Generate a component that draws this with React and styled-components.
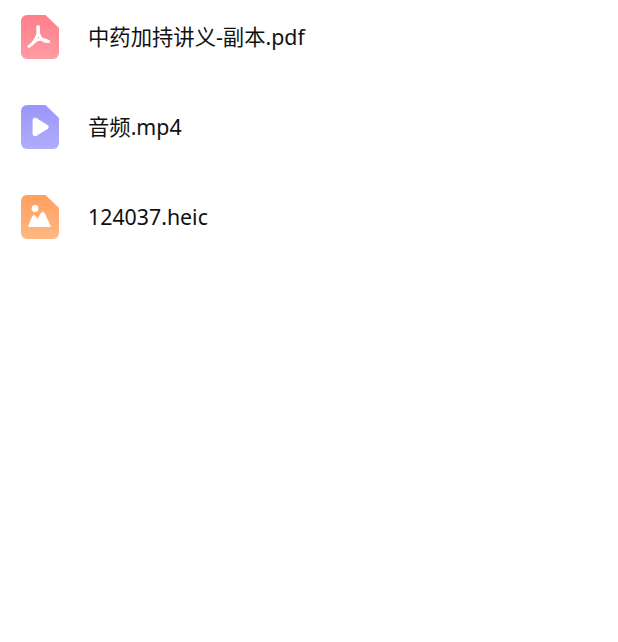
import React from "react"
import styled, { createGlobalStyle } from "styled-components"

const GlobalStyle = createGlobalStyle`
  html, body {
    margin: 0;
    background: #fff;
  }
`

const FileList = styled.ul`
  list-style: none;
  margin: 0;
  padding: 15px 0 0 21px;
  display: flex;
  flex-direction: column;
  gap: 46px;
`

const FileRow = styled.li`
  display: flex;
  align-items: center;
  gap: 29px;
  height: 44px;
`

const FileName = styled.span`
  font-family: "Noto Sans", "Noto Sans CJK SC", sans-serif;
  font-size: 21.33px;
  color: #111;
  line-height: 44px;
`

const IconSvg = styled.svg`
  display: block;
  flex: none;
  width: 38px;
  height: 44px;
`

const sheet = "M6 0H24.5L38 13V38a6 6 0 0 1-6 6H6a6 6 0 0 1-6-6V6a6 6 0 0 1 6-6Z"

const FileIcon = ({ id, from, to, children }) => (
  <IconSvg viewBox="0 0 38 44">
    <defs>
      <linearGradient id={id} x1="0" y1="0" x2="0" y2="1">
        <stop offset="0" stopColor={from} />
        <stop offset="1" stopColor={to} />
      </linearGradient>
    </defs>
    <path d={sheet} fill={`url(#${id})`} />
    {children}
  </IconSvg>
)

const PdfGlyph = () => (
  <g fill="none" stroke="#fff" strokeLinecap="round" strokeLinejoin="round">
    <path d="M16.8 11.8c-.2 3.6.8 7.8 2.8 10.8 1.9 2.8 4.6 4 8 3.9" strokeWidth="3" />
    <path d="M17.6 12c.4 4.8-1.2 9.6-3.6 13.4-1.5 2.4-3.4 4.8-6 6" strokeWidth="3" />
    <path d="M12 28c3.2-2.8 9-5.2 15.6-2" strokeWidth="2.4" />
  </g>
)

const PlayGlyph = () => (
  <path
    d="M11.6 15.2c0-1.9 2-3.1 3.6-2.1l11.4 6.9c1.5.9 1.5 3.1 0 4l-11.4 6.9c-1.6 1-3.6-.2-3.6-2.1Z"
    fill="#fff"
  />
)

const ImageGlyph = () => (
  <>
    <circle cx="14" cy="13.5" r="3.4" fill="#fff" />
    <path
      d="M7.5 31.5 11.6 21.5c.5-1.2 2-1.3 2.7-.2l2.3 3.2 3.8-6.6c.6-1 2-1 2.6 0l6.5 13.6Z"
      fill="#fff"
      stroke="#fff"
      strokeLinejoin="round"
    />
  </>
)

const files = [
  { name: "中药加持讲义-副本.pdf", id: "pdf", from: "#ff7e8b", to: "#ff9ba4", Glyph: PdfGlyph },
  { name: "音频.mp4", id: "video", from: "#9a96fb", to: "#b0adfd", Glyph: PlayGlyph },
  { name: "124037.heic", id: "image", from: "#ffa060", to: "#ffb883", Glyph: ImageGlyph },
]

export default function App() {
  return (
    <>
      <GlobalStyle />
      <FileList>
        {files.map(({ name, id, from, to, Glyph }) => (
          <FileRow key={id}>
            <FileIcon id={id} from={from} to={to}>
              <Glyph />
            </FileIcon>
            <FileName>{name}</FileName>
          </FileRow>
        ))}
      </FileList>
    </>
  )
}
